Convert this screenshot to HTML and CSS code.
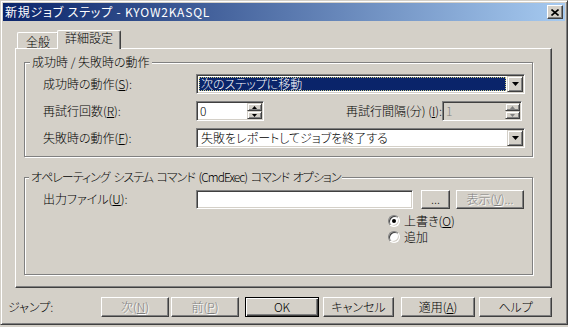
FILE: index.html
```html
<!DOCTYPE html>
<html lang="ja">
<head>
    <meta charset="UTF-8">
    <title>新規ジョブ ステップ - KYOW2KASQL</title>
    <link rel="stylesheet" href="styles.css">
</head>
<body>
    <div class="window">
        <div class="titlebar">
            <span class="title">新規ジョブ ステップ - KYOW2KASQL</span>
            <span class="close">
                <svg width="8" height="7" viewBox="0 0 8 7"><path d="M0.5 0.5L7.5 6.5M7.5 0.5L0.5 6.5" stroke="#000" stroke-width="1.6"/></svg>
            </span>
        </div>

        <div class="client">
            <div class="tabs">
                <div class="tab tab-general">全般</div>
                <div class="tab active">詳細設定</div>
            </div>

            <div class="panel">
                <!-- 成功時 / 失敗時 -->
                <div class="group group1">
                    <div class="legend">成功時 / 失敗時の動作</div>
                    <div class="row">
                        <span class="label">成功時の動作(<u>S</u>):</span>
                        <div class="combo">
                            <span class="value sel">次のステップに移動</span>
                            <span class="drop"><svg width="7" height="4" viewBox="0 0 7 4"><path d="M0 0h7L3.5 4z" fill="#000"/></svg></span>
                        </div>
                    </div>
                    <div class="row">
                        <span class="label">再試行回数(<u>R</u>):</span>
                        <div class="spin">
                            <span class="num">0</span>
                            <span class="spin-btns">
                                <span class="sb"><svg width="5" height="3" viewBox="0 0 5 3"><path d="M2.5 0L5 3H0z" fill="#000"/></svg></span>
                                <span class="sb"><svg width="5" height="3" viewBox="0 0 5 3"><path d="M0 0h5L2.5 3z" fill="#000"/></svg></span>
                            </span>
                        </div>
                        <span class="label2">再試行間隔(分) (<u>I</u>):</span>
                        <div class="spin spin-off">
                            <span class="num">1</span>
                            <span class="spin-btns">
                                <span class="sb"><svg width="5" height="3" viewBox="0 0 5 3"><path d="M2.5 0L5 3H0z" fill="#808080"/></svg></span>
                                <span class="sb"><svg width="5" height="3" viewBox="0 0 5 3"><path d="M0 0h5L2.5 3z" fill="#808080"/></svg></span>
                            </span>
                        </div>
                    </div>
                    <div class="row">
                        <span class="label">失敗時の動作(<u>F</u>):</span>
                        <div class="combo">
                            <span class="value">失敗をレポートしてジョブを終了する</span>
                            <span class="drop"><svg width="7" height="4" viewBox="0 0 7 4"><path d="M0 0h7L3.5 4z" fill="#000"/></svg></span>
                        </div>
                    </div>
                </div>

                <!-- CmdExec -->
                <div class="group group2">
                    <div class="legend legend-cmd">オペレーティング システム コマンド (CmdExec) コマンド オプション</div>
                    <div class="row row-file">
                        <span class="label">出力ファイル(<u>U</u>):</span>
                        <div class="edit"></div>
                        <button class="btn btn-browse">...</button>
                        <button class="btn btn-view off">表示(<u>V</u>)...</button>
                    </div>
                    <div class="radios">
                        <div class="radio-row"><span class="radio checked"></span><span>上書き(<u>O</u>)</span></div>
                        <div class="radio-row"><span class="radio"></span><span>追加</span></div>
                    </div>
                </div>
            </div>

            <div class="footer">
                <span class="jump">ジャンプ:</span>
                <button class="btn b-next off">次(<u>N</u>)</button>
                <button class="btn b-prev off">前(<u>P</u>)</button>
                <button class="btn b-ok default">OK</button>
                <button class="btn b-cancel">キャンセル</button>
                <button class="btn b-apply">適用(<u>A</u>)</button>
                <button class="btn b-help">ヘルプ</button>
            </div>
        </div>
    </div>
</body>
</html>
```

FILE: styles.css
```css
body {
    margin: 0;
    background: #d4d0c8;
    font-family: "Noto Sans CJK JP", "Noto Sans", sans-serif;
    font-size: 12px;
    font-weight: 300;
    color: #000;
    font-feature-settings: "palt";
}

.window {
    width: 568px;
    height: 325px;
    box-sizing: border-box;
    border: 1px solid;
    border-color: #d4d0c8 #404040 #404040 #d4d0c8;
    box-shadow: inset 1px 1px #fff, inset -1px -1px #808080;
    padding: 2px;
}

/* タイトルバー */
.titlebar {
    height: 18px;
    display: flex;
    align-items: center;
    justify-content: space-between;
    background: linear-gradient(to right, #0a246a, #a6caf0);
    color: #fff;
    padding: 0 2px;
}

.title {
    line-height: 12px;
    letter-spacing: 0.8px;
    font-weight: 400;
    white-space: nowrap;
}

.close {
    width: 16px;
    height: 14px;
    box-sizing: border-box;
    background: #d4d0c8;
    border: 1px solid;
    border-color: #fff #404040 #404040 #fff;
    box-shadow: inset -1px -1px #808080;
    display: flex;
    align-items: center;
    justify-content: center;
}

.client {
    padding: 9px 0 0 5px;
}

/* タブ */
.tabs {
    display: flex;
    align-items: flex-end;
    height: 18px;
    margin-left: 9px;
}

.tab {
    box-sizing: border-box;
    height: 16px;
    border: 1px solid;
    border-bottom: none;
    border-color: #fff #404040 #fff #fff;
    border-radius: 2px 2px 0 0;
    box-shadow: inset -1px 0 #808080;
    text-align: center;
    line-height: 12px;
    padding-top: 3px;
    white-space: nowrap;
}

.tab-general {
    width: 42px;
}

.tab.active {
    height: 19px;
    width: 64px;
    margin-left: -2px;
    margin-bottom: -1px;
    padding-top: 1px;
    background: #d4d0c8;
    position: relative;
    z-index: 1;
}

.panel {
    margin-left: 7px;
    width: 537px;
    height: 240px;
    box-sizing: border-box;
    border: 1px solid;
    border-color: #fff #404040 #404040 #fff;
    box-shadow: inset -1px -1px #808080;
    padding-left: 8px;
}

/* グループ */
.group {
    box-sizing: border-box;
    width: 509px;
    border: 1px solid #808080;
    box-shadow: 1px 1px #fff, inset 1px 1px #fff;
    padding: 0 7px 0 18px;
}

.group1 {
    margin-top: 13px;
    height: 95px;
}

.group2 {
    margin-top: 20px;
    height: 98px;
}

.legend {
    width: fit-content;
    height: 12px;
    line-height: 12px;
    margin: -7px 0 0 -13px;
    padding: 0 2px;
    background: #d4d0c8;
    white-space: nowrap;
}

.legend-cmd {
    margin-left: -14px;
    letter-spacing: -1px;
    word-spacing: 2px;
}

.row {
    display: flex;
    align-items: center;
    height: 20px;
    margin-top: 7px;
}

.legend + .row {
    margin-top: 6px;
}

.label {
    width: 153px;
    flex: none;
    line-height: 12px;
    white-space: nowrap;
}

.label2 {
    margin-left: auto;
    line-height: 12px;
    white-space: nowrap;
}

.combo, .spin, .edit {
    box-sizing: border-box;
    height: 20px;
    border: 1px solid;
    border-color: #808080 #fff #fff #808080;
    box-shadow: inset 1px 1px #404040, inset -1px -1px #d4d0c8;
    background: #fff;
    display: flex;
    align-items: center;
    padding: 1px;
}

.combo {
    width: 329px;
}

.combo .value {
    flex: 1;
    height: 14px;
    line-height: 14px;
    margin: 0 1px;
    padding-left: 2px;
    white-space: nowrap;
}

.combo .value.sel {
    background: #0a246a;
    color: #fff;
    outline: 1px dotted #c8c880;
    outline-offset: -1px;
}

.drop, .sb {
    box-sizing: border-box;
    background: #d4d0c8;
    border: 1px solid;
    border-color: #d4d0c8 #404040 #404040 #d4d0c8;
    box-shadow: inset 1px 1px #fff, inset -1px -1px #808080;
    display: flex;
    align-items: center;
    justify-content: center;
}

.drop {
    width: 16px;
    height: 16px;
}

.spin {
    width: 68px;
}

.spin .num {
    flex: 1;
    line-height: 16px;
    padding-left: 2px;
}

.spin-btns {
    width: 15px;
    height: 16px;
    display: flex;
    flex-direction: column;
}

.sb {
    height: 8px;
}

.spin-off {
    width: 80px;
    margin-right: 3px;
    background: #d4d0c8;
    color: #808080;
}

.edit {
    width: 217px;
    height: 19px;
}

/* ボタン */
.btn {
    box-sizing: border-box;
    height: 20px;
    margin: 0;
    padding: 0;
    font: inherit;
    color: #000;
    background: #d4d0c8;
    border: 1px solid;
    border-color: #fff #404040 #404040 #fff;
    box-shadow: inset -1px -1px #808080;
    line-height: 16px;
    text-align: center;
    white-space: nowrap;
}

.btn.off {
    color: #808080;
    text-shadow: 1px 1px 0 #fff;
}

.btn.default {
    border-color: #000;
    box-shadow: inset 1px 1px #fff, inset -1px -1px #404040, inset -2px -2px #808080;
}

.btn-browse {
    width: 29px;
    height: 19px;
    margin-left: 8px;
}

.btn-view {
    width: 68px;
    height: 19px;
    margin-left: 6px;
}

.radios {
    margin: 4px 0 0 345px;
}

.radio-row {
    display: flex;
    align-items: center;
    height: 16px;
    gap: 4px;
    line-height: 12px;
}

.radio {
    width: 12px;
    height: 12px;
    box-sizing: border-box;
    border-radius: 50%;
    border: 1px solid;
    border-color: #808080 #fff #fff #808080;
    box-shadow: inset 1px 1px #404040, inset -1px -1px #d4d0c8;
    background: #fff;
    display: flex;
    align-items: center;
    justify-content: center;
}

.radio.checked::after {
    content: "";
    width: 4px;
    height: 4px;
    border-radius: 50%;
    background: #000;
}

/* 下部 */
.footer {
    display: flex;
    align-items: center;
    margin-top: 9px;
}

.jump {
    width: 93px;
    line-height: 12px;
}

.b-next { width: 68px; }
.b-prev { width: 68px; margin-left: 2px; }
.b-ok { width: 74px; margin-left: 6px; }
.b-cancel { width: 71px; margin-left: 4px; }
.b-apply { width: 74px; margin-left: 7px; }
.b-help { width: 73px; margin-left: 4px; }
```
